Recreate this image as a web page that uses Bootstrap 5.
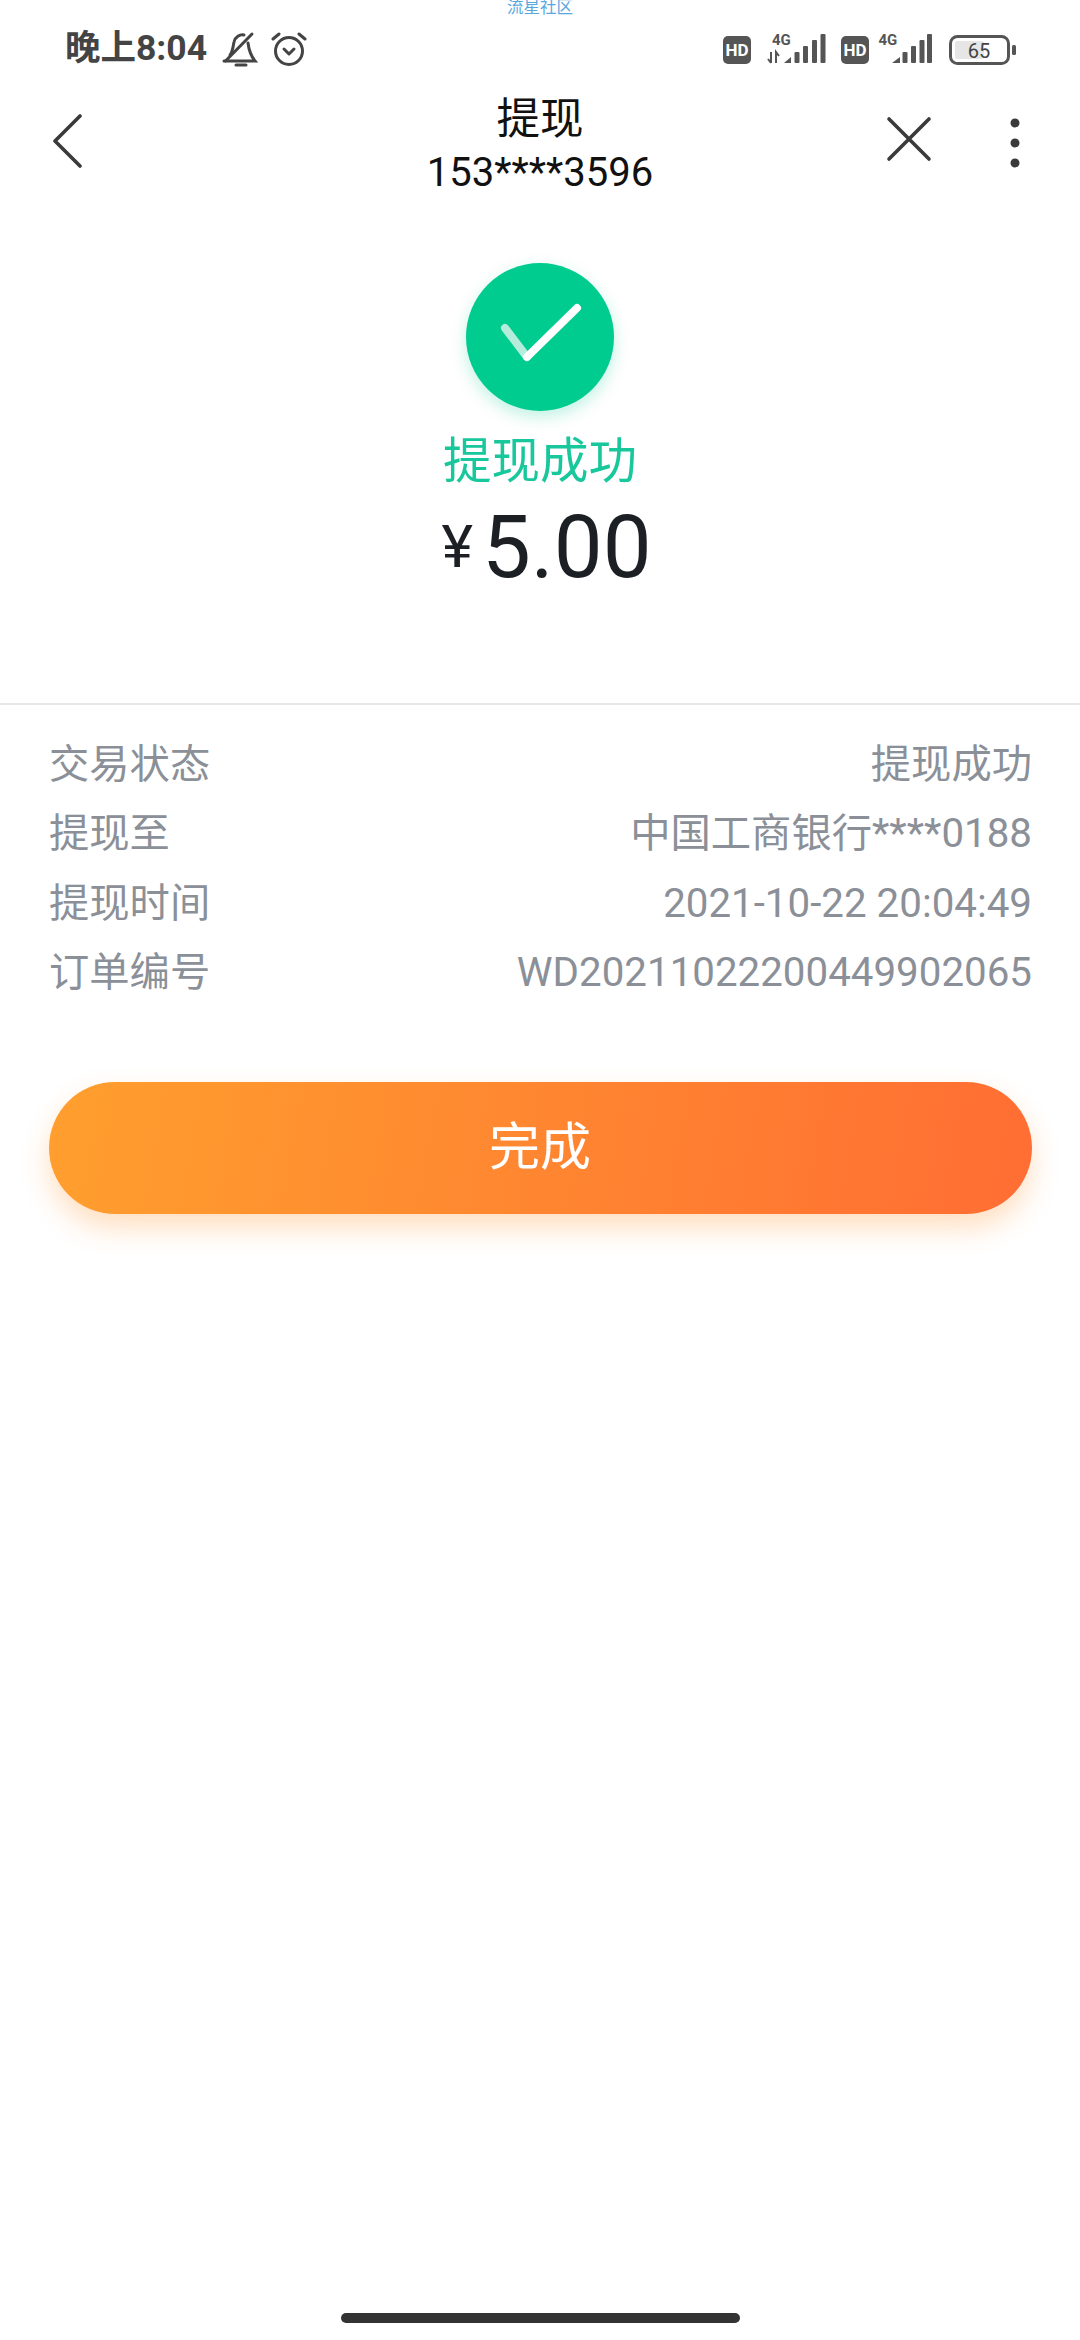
<!DOCTYPE html>
<html lang="zh-CN">
<head>
<meta charset="UTF-8">
<title>提现</title>
<meta name="viewport" content="width=device-width, initial-scale=1.0">
<link href="https://cdn.jsdelivr.net/npm/bootstrap@5.3.3/dist/css/bootstrap.min.css" rel="stylesheet">
<style>
    body {
    background: #fff;
    font-family: Roboto, "Noto Sans CJK SC", sans-serif;
    width: 1080px;
    height: 2340px;
    overflow: hidden;
    }

    .page {
    height: 2340px;
    }

    .watermark {
    height: 16px;
    font-size: 16.5px;
    line-height: 16px;
    color: #5aa7e0;
    }

    .status-bar {
    height: 66px;
    padding: 0 63px 0 65px;
    color: #444;
    }

    .status-time {
    font-size: 35.5px;
    font-weight: 700;
    line-height: 1;
    margin-right: 2px;
    }

    .status-left { gap: 13px; }

    .title-bar {
    height: 122px;
    padding: 0 60px 0 52px;
    }

    .title-main {
    font-size: 43.5px;
    line-height: 59px;
    color: #111;
    }

    .title-sub {
    font-size: 40px;
    line-height: 48px;
    color: #111;
    }

    .bar-left { width: 142px; }
    .bar-right { width: 134px; }

    .hero {
    margin-top: 59px;
    }

    .ok-circle {
    width: 148px;
    height: 148px;
    background: #00cc8f;
    box-shadow: 0 6px 16px rgba(0, 204, 143, .25);
    }

    .ok-text {
    font-size: 48.5px;
    line-height: 64px;
    color: #18c79b;
    margin-top: 19px;
    }

    .amount {
    color: #1c2025;
    line-height: 90px;
    gap: 9px;
    margin: 8px 0 0 13px;
    }

    .amount-yen { font-size: 60px; }
    .amount-num { font-size: 87px; }

    .detail-top {
    height: 113px;
    border-bottom: 2px solid #e6e7e9;
    }

    .detail-list {
    padding: 25px 48px 0 49px;
    }

    .detail-row {
    height: 69.5px;
    font-size: 40.3px;
    color: #8b9098;
    }

    .btn-done {
    width: 983px;
    height: 132px;
    margin: 74px auto 0;
    display: block;
    border: 0;
    border-radius: 66px;
    color: #fff;
    font-size: 51px;
    background: linear-gradient(100deg, #ff9f2e, #ff6d33);
    box-shadow: 0 14px 28px rgba(255, 150, 50, .3);
    }

    .home-wrap {
    padding-bottom: 17px;
    }

    .home-bar {
    width: 399px;
    height: 10px;
    background: #333;
    }
</style>
</head>
<body>
<div class="page d-flex flex-column">
    <div class="watermark text-center">流星社区</div>

    <div class="status-bar d-flex justify-content-between align-items-center">
    <div class="status-left d-flex align-items-center">
        <span class="status-time">晚上8:04</span>
        <svg width="36" height="36" viewBox="0 0 36 36" fill="none" stroke="#444" stroke-width="3" stroke-linecap="round">
        <path d="M2 30H33C29 25 27 20 26 12"/><path d="M8 24C11 20 11 15 12 11C13 6 18 3 22 4"/><path d="M30 3L3.5 30"/><path d="M14 34H24"/>
        </svg>
        <svg width="36" height="36" viewBox="0 0 36 36" fill="none" stroke="#444" stroke-width="3" stroke-linecap="round" stroke-linejoin="round">
        <circle cx="18" cy="20" r="13.5"/><path d="M2 8L8 3"/><path d="M34 8L28 3"/><path d="M13 18L18 23L23 18"/>
        </svg>
    </div>
    <div class="d-flex align-items-center">
        <svg width="294" height="36" viewBox="0 0 294 36">
        <rect x="0" y="5" width="28" height="28" rx="5" fill="#555"/>
        <text x="14" y="25" text-anchor="middle" font-family="Roboto" font-weight="700" font-size="17" fill="#fff">HD</text>
        <text x="49" y="14" font-family="Roboto" font-weight="700" font-size="15" fill="#555">4G</text>
        <path d="M48 21V32M45 28L48 32M53 32V21L56 25" stroke="#555" stroke-width="2" fill="none"/>
        <path d="M61 32L68 26V32Z" fill="#555"/>
        <rect x="71.5" y="21" width="5" height="11" rx="1" fill="#555"/><rect x="80" y="15" width="5" height="17" rx="1" fill="#555"/><rect x="89" y="9" width="5" height="23" rx="1" fill="#555"/><rect x="97.5" y="3" width="5" height="29" rx="1" fill="#555"/>
        <rect x="118" y="5" width="28" height="28" rx="5" fill="#555"/>
        <text x="132" y="25" text-anchor="middle" font-family="Roboto" font-weight="700" font-size="17" fill="#fff">HD</text>
        <text x="155.5" y="14" font-family="Roboto" font-weight="700" font-size="15" fill="#555">4G</text>
        <path d="M169 32L177 26V32Z" fill="#555"/>
        <rect x="179.5" y="21" width="5" height="11" rx="1" fill="#555"/><rect x="188" y="15" width="5" height="17" rx="1" fill="#555"/><rect x="196.5" y="9" width="5" height="23" rx="1" fill="#555"/><rect x="204" y="3" width="5" height="29" rx="1" fill="#555"/>
        <rect x="227.5" y="5.5" width="58" height="27" rx="7" fill="none" stroke="#555" stroke-width="3"/>
        <rect x="232" y="10" width="29" height="18" rx="2" fill="#e6e6e6"/>
        <text x="256" y="27" text-anchor="middle" font-family="Roboto" font-size="20" fill="#444">65</text>
        <rect x="289" y="14" width="4" height="10" rx="1.5" fill="#555"/>
        </svg>
    </div>
    </div>

    <div class="title-bar d-flex justify-content-between align-items-center">
    <div class="bar-left">
        <svg class="mb-1" width="30" height="56" viewBox="0 0 30 56" fill="none" stroke="#3a3a3a" stroke-width="3.6" stroke-linecap="round" stroke-linejoin="round"><path d="M28 3L3 28L28 53"/></svg>
    </div>
    <div class="text-center">
        <div class="title-main">提现</div>
        <div class="title-sub">153****3596</div>
    </div>
    <div class="bar-right d-flex justify-content-between align-items-center">
        <svg class="mb-2" width="46" height="46" viewBox="0 0 46 46" fill="none" stroke="#3a3a3a" stroke-width="3.6" stroke-linecap="round"><path d="M3 3L43 43M43 3L3 43"/></svg>
        <svg width="10" height="50" viewBox="0 0 10 50" fill="#3a3a3a"><circle cx="5" cy="5" r="4.5"/><circle cx="5" cy="25" r="4.5"/><circle cx="5" cy="45" r="4.5"/></svg>
    </div>
    </div>

    <div class="hero d-flex flex-column align-items-center">
    <div class="ok-circle rounded-circle">
        <svg width="148" height="148" viewBox="0 0 148 148" fill="none" stroke-width="8" stroke-linecap="round">
        <path d="M39 65L61 94" stroke="#b5ecdc"/><path d="M61 94L111 45" stroke="#fff"/>
        </svg>
    </div>
    <div class="ok-text">提现成功</div>
    <div class="amount d-flex align-items-center">
        <span class="amount-yen">¥</span>
        <span class="amount-num">5.00</span>
    </div>
    </div>

    <div class="detail-top"></div>

    <div class="detail-list">
    <div class="detail-row d-flex justify-content-between align-items-center"><span>交易状态</span><span>提现成功</span></div>
    <div class="detail-row d-flex justify-content-between align-items-center"><span>提现至</span><span>中国工商银行****0188</span></div>
    <div class="detail-row d-flex justify-content-between align-items-center"><span>提现时间</span><span>2021-10-22 20:04:49</span></div>
    <div class="detail-row d-flex justify-content-between align-items-center"><span>订单编号</span><span>WD20211022200449902065</span></div>
    </div>

    <button type="button" class="btn-done">完成</button>

    <div class="home-wrap mt-auto d-flex justify-content-center">
    <div class="home-bar rounded-pill"></div>
    </div>
</div>
</body>
</html>
